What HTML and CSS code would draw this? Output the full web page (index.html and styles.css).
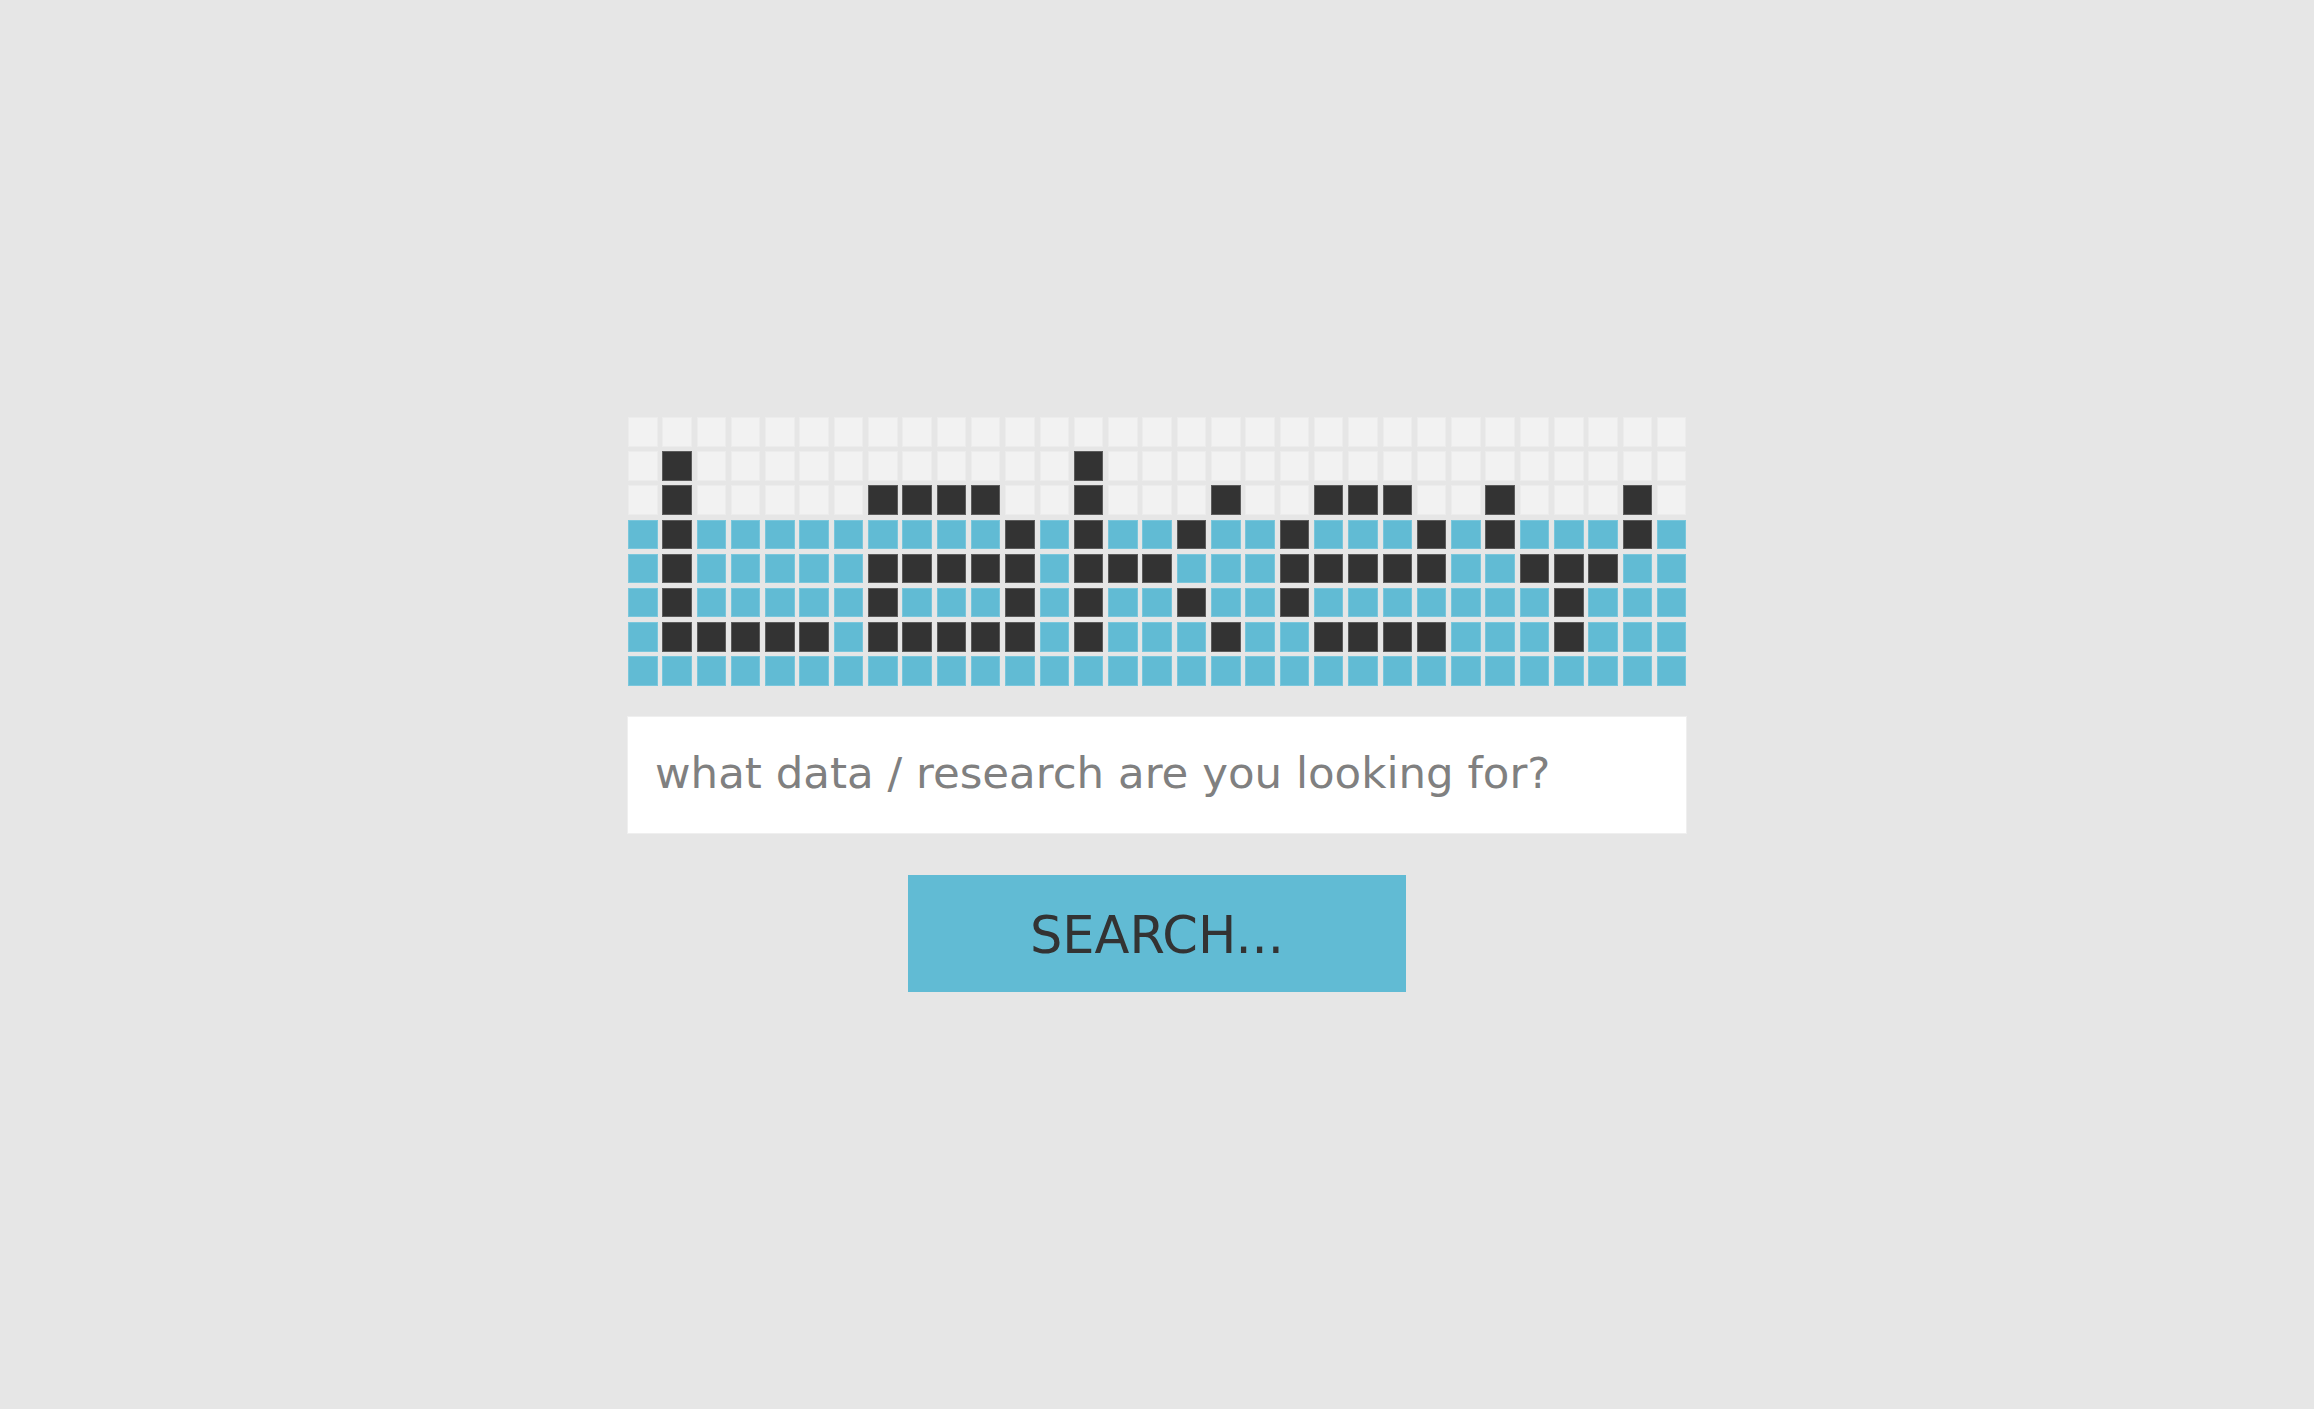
FILE: index.html
```
<!DOCTYPE html>
<html lang="en">
<head>
<meta charset="utf-8">
<title>Search</title>
<link rel="stylesheet" href="styles.css">
</head>
<body>
<main class="wrap">
  <div class="grid">
    <i class="l"></i><i class="l"></i><i class="l"></i><i class="l"></i><i class="l"></i><i class="l"></i><i class="l"></i><i class="l"></i><i class="l"></i><i class="l"></i><i class="l"></i><i class="l"></i><i class="l"></i><i class="l"></i><i class="l"></i><i class="l"></i><i class="l"></i><i class="l"></i><i class="l"></i><i class="l"></i><i class="l"></i><i class="l"></i><i class="l"></i><i class="l"></i><i class="l"></i><i class="l"></i><i class="l"></i><i class="l"></i><i class="l"></i><i class="l"></i><i class="l"></i>

    <i class="l"></i><i class="d"></i><i class="l"></i><i class="l"></i><i class="l"></i><i class="l"></i><i class="l"></i><i class="l"></i><i class="l"></i><i class="l"></i><i class="l"></i><i class="l"></i><i class="l"></i><i class="d"></i><i class="l"></i><i class="l"></i><i class="l"></i><i class="l"></i><i class="l"></i><i class="l"></i><i class="l"></i><i class="l"></i><i class="l"></i><i class="l"></i><i class="l"></i><i class="l"></i><i class="l"></i><i class="l"></i><i class="l"></i><i class="l"></i><i class="l"></i>

    <i class="l"></i><i class="d"></i><i class="l"></i><i class="l"></i><i class="l"></i><i class="l"></i><i class="l"></i><i class="d"></i><i class="d"></i><i class="d"></i><i class="d"></i><i class="l"></i><i class="l"></i><i class="d"></i><i class="l"></i><i class="l"></i><i class="l"></i><i class="d"></i><i class="l"></i><i class="l"></i><i class="d"></i><i class="d"></i><i class="d"></i><i class="l"></i><i class="l"></i><i class="d"></i><i class="l"></i><i class="l"></i><i class="l"></i><i class="d"></i><i class="l"></i>

    <i class="b"></i><i class="d"></i><i class="b"></i><i class="b"></i><i class="b"></i><i class="b"></i><i class="b"></i><i class="b"></i><i class="b"></i><i class="b"></i><i class="b"></i><i class="d"></i><i class="b"></i><i class="d"></i><i class="b"></i><i class="b"></i><i class="d"></i><i class="b"></i><i class="b"></i><i class="d"></i><i class="b"></i><i class="b"></i><i class="b"></i><i class="d"></i><i class="b"></i><i class="d"></i><i class="b"></i><i class="b"></i><i class="b"></i><i class="d"></i><i class="b"></i>

    <i class="b"></i><i class="d"></i><i class="b"></i><i class="b"></i><i class="b"></i><i class="b"></i><i class="b"></i><i class="d"></i><i class="d"></i><i class="d"></i><i class="d"></i><i class="d"></i><i class="b"></i><i class="d"></i><i class="d"></i><i class="d"></i><i class="b"></i><i class="b"></i><i class="b"></i><i class="d"></i><i class="d"></i><i class="d"></i><i class="d"></i><i class="d"></i><i class="b"></i><i class="b"></i><i class="d"></i><i class="d"></i><i class="d"></i><i class="b"></i><i class="b"></i>

    <i class="b"></i><i class="d"></i><i class="b"></i><i class="b"></i><i class="b"></i><i class="b"></i><i class="b"></i><i class="d"></i><i class="b"></i><i class="b"></i><i class="b"></i><i class="d"></i><i class="b"></i><i class="d"></i><i class="b"></i><i class="b"></i><i class="d"></i><i class="b"></i><i class="b"></i><i class="d"></i><i class="b"></i><i class="b"></i><i class="b"></i><i class="b"></i><i class="b"></i><i class="b"></i><i class="b"></i><i class="d"></i><i class="b"></i><i class="b"></i><i class="b"></i>

    <i class="b"></i><i class="d"></i><i class="d"></i><i class="d"></i><i class="d"></i><i class="d"></i><i class="b"></i><i class="d"></i><i class="d"></i><i class="d"></i><i class="d"></i><i class="d"></i><i class="b"></i><i class="d"></i><i class="b"></i><i class="b"></i><i class="b"></i><i class="d"></i><i class="b"></i><i class="b"></i><i class="d"></i><i class="d"></i><i class="d"></i><i class="d"></i><i class="b"></i><i class="b"></i><i class="b"></i><i class="d"></i><i class="b"></i><i class="b"></i><i class="b"></i>

    <i class="b"></i><i class="b"></i><i class="b"></i><i class="b"></i><i class="b"></i><i class="b"></i><i class="b"></i><i class="b"></i><i class="b"></i><i class="b"></i><i class="b"></i><i class="b"></i><i class="b"></i><i class="b"></i><i class="b"></i><i class="b"></i><i class="b"></i><i class="b"></i><i class="b"></i><i class="b"></i><i class="b"></i><i class="b"></i><i class="b"></i><i class="b"></i><i class="b"></i><i class="b"></i><i class="b"></i><i class="b"></i><i class="b"></i><i class="b"></i><i class="b"></i>
  </div>
  <input class="query" type="text" placeholder="what data / research are you looking for?">
  <button class="search" type="button">SEARCH...</button>
</main>
</body>
</html>
```
FILE: styles.css
```
html, body {
  margin: 0;
  padding: 0;
  background: #e6e6e6;
  font-family: "DejaVu Sans", "Liberation Sans", sans-serif;
}

.wrap {
  width: 1060px;
  margin: 0 auto;
  padding-top: 417px;
  display: flex;
  flex-direction: column;
  align-items: center;
}

.grid {
  display: grid;
  grid-template-columns: repeat(31, 29.5px);
  grid-auto-rows: 29.5px;
  column-gap: 4.8px;
  row-gap: 4.7px;
  margin-left: 1px;
  align-self: flex-start;
}

.grid i {
  display: block;
}

.grid .l {
  background: #f2f2f2;
  box-shadow: inset 0 0 0 1px #ececec;
}

.grid .b {
  background: #61bbd4;
  box-shadow: inset 0 0 0 1px #7ac7dc;
}

.grid .d {
  background: #333333;
  box-shadow: inset 0 0 0 1px #5c5c5c;
}

.query {
  box-sizing: border-box;
  width: 1060px;
  height: 118px;
  margin: 30px 0 0;
  padding: 0 0 4px 27px;
  border: 1px solid #efefef;
  background: #ffffff;
  font-family: "DejaVu Sans", sans-serif;
  font-size: 43.5px;
  color: #808080;
  outline: none;
}

.query::placeholder {
  color: #808080;
  opacity: 1;
}

.search {
  box-sizing: border-box;
  width: 498px;
  height: 117px;
  margin-top: 41px;
  padding: 5px 0 0;
  border: none;
  background: #61bbd4;
  color: #333333;
  font-family: "DejaVu Sans", sans-serif;
  font-size: 51px;
  cursor: pointer;
}
```
